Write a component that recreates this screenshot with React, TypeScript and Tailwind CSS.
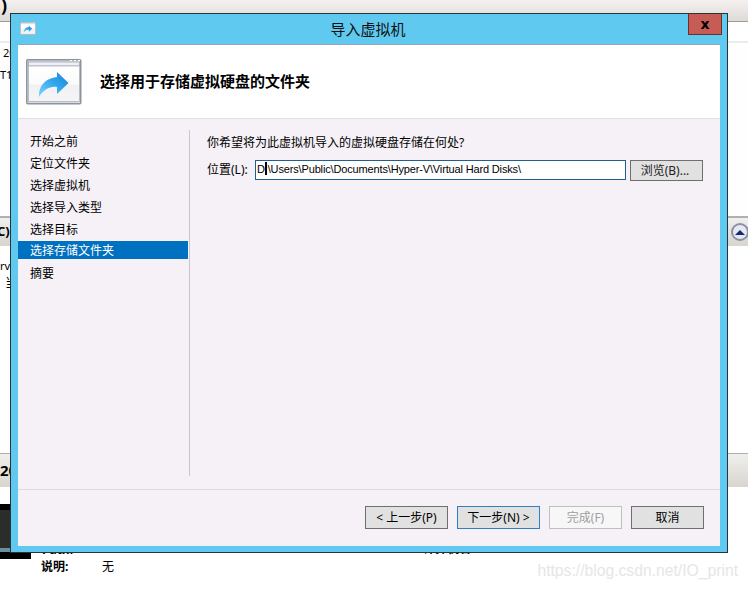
import React from 'react';

const cjk = { fontFamily: '"Noto Sans", "Noto Sans CJK SC", sans-serif' };

const steps = ['开始之前', '定位文件夹', '选择虚拟机', '选择导入类型', '选择目标', '选择存储文件夹', '摘要'];

const WizardIcon: React.FC<{ className: string }> = ({ className }) => (
  <svg viewBox="0 0 56 46" className={className}>
    <defs>
      <linearGradient id="arrowFill" x1="0" y1="1" x2="1" y2="0">
        <stop offset="0" stopColor="#7fd4fb" />
        <stop offset="0.55" stopColor="#2fa5ee" />
        <stop offset="1" stopColor="#1d7fd0" />
      </linearGradient>
      <linearGradient id="paneFill" x1="0" y1="0" x2="0" y2="1">
        <stop offset="0" stopColor="#ffffff" />
        <stop offset="0.5" stopColor="#fbfbfc" />
        <stop offset="0.55" stopColor="#f1f1f3" />
        <stop offset="1" stopColor="#f5f5f7" />
      </linearGradient>
    </defs>
    <rect x="0.75" y="0.75" width="54" height="44" rx="1" fill="#d9dce3" stroke="#8e939c" strokeWidth="1.5" />
    <rect x="2.5" y="3" width="51" height="4" fill="#eef0f5" stroke="#9aa0ab" strokeWidth="0.75" />
    <rect x="2.5" y="7" width="51" height="35.5" fill="url(#paneFill)" stroke="#a8aeb8" strokeWidth="0.75" />
    <path d="M44 1.5h2M48 1.5h2M52 1.5h2" stroke="#ffffff" strokeWidth="1" />
    <path
      d="M13 38 C12 27 20 19 31 18 L31 13 L42.5 24 L31 35 L31 28 C24 27 17 31 13 38 Z"
      fill="url(#arrowFill)"
    />
  </svg>
);

const DlgButton: React.FC<{ className: string; children: React.ReactNode }> = ({ className, children }) => (
  <button className={`h-[23px] border text-[12px] leading-none flex items-center justify-center ${className}`}>
    {children}
  </button>
);

export default function App() {
  return (
    <div className="relative w-[748px] h-[590px] overflow-hidden bg-white text-black" style={cjk}>
      {/* window behind the dialog */}
      <div className="flex flex-col h-full">
        <div className="h-[22px] bg-gradient-to-b from-[#f3f0ef] to-[#dedbd6] border-b border-[#9d9d9b] text-[18px] font-bold leading-[10px] pl-[1px]">
          )
        </div>
        <div className="h-[21px] border-b-2 border-[#ececec]" />
        <div className="h-[173px] text-[11px] leading-[22px] bg-[#fefefe]">
          <p className="pl-[3px] -mt-[1px]">20</p>
          <p>T1</p>
        </div>
        <div className="h-[30px] border-t-2 border-[#b0b0b0] bg-gradient-to-b from-[#f1efec] to-[#d8d5cf] flex items-center justify-between pl-0">
          <span className="text-[13px] font-bold -ml-[3px]">C)</span>
          <span className="w-[18px] h-[18px] mr-[-1px] rounded-full border-2 border-[#8c90a8] bg-[#e8e9ee] flex items-center justify-center">
            <span className="w-0 h-0 border-x-[5px] border-x-transparent border-b-[5px] border-b-[#12297a]" />
          </span>
        </div>
        <div className="h-[207px] text-[11px] leading-[16px] pt-[12px]">
          <p>rv</p>
          <p className="pl-[5px] text-[13px]">当</p>
        </div>
        <div className="h-[34px] border-t border-[#b0b0b0] bg-gradient-to-b from-[#f1efec] to-[#d8d5cf] text-[15px] font-bold flex items-center">
          20
        </div>
        <div className="h-[17px]" />
        <div className="h-[55px] flex">
          <div className="w-[31px] flex flex-col">
            <div className="h-[6px] bg-black" />
            <div className="h-[38px] bg-[#2b2d2b]" />
            <div className="h-[4px] bg-[#6a8f9e]" />
            <div className="h-[7px] bg-black" />
          </div>
          <span className="ml-[11px] mt-[37px] h-[16px] text-[12px] font-bold">Path:</span>
          <span className="ml-[350px] mt-[36px] h-[16px] text-[12px] font-bold">计算机名:</span>
        </div>
        <div className="flex-1 flex items-start justify-between pl-[41px] pr-[10px] text-[12px]">
          <div className="flex -mt-[1px]">
            <span className="w-[61px] font-bold">说明:</span>
            <span>无</span>
          </div>
          <span className="text-[#e6e6e6] text-[15.7px] leading-[18px] mt-[3px]" style={{ fontFamily: '"Liberation Sans", sans-serif' }}>
            https://blog.csdn.net/IO_print
          </span>
        </div>
      </div>

      {/* dialog */}
      <div className="absolute left-[10px] top-[13px] w-[718px] h-[540px] border border-[#27343c] bg-[#60c9f0] flex flex-col px-[7px] pb-[6px]">
        <div className="h-[30px] shrink-0 grid grid-cols-[1fr_auto_1fr] items-start -mx-[7px] px-[9px]">
          <WizardIcon className="w-[16px] h-[13px] mt-[8px]" />
          <span className="text-[15px] leading-[30px] text-[#111] pr-[2px]">导入虚拟机</span>
          <div className="flex justify-end -mr-[4px]">
            <div className="w-[34px] h-[21px] bg-[#c75b55] border border-[#6b2f2c] border-t-0 flex items-center justify-center text-[14px] font-bold leading-none" style={{ fontFamily: '"DejaVu Sans", sans-serif' }}>
              x
            </div>
          </div>
        </div>

        <div className="flex-1 flex flex-col bg-[#f5f1f6] border-t border-[#8fa9b8]">
          <div className="h-[74px] bg-white border-b border-[#e4dde6] flex items-center shrink-0">
            <WizardIcon className="w-[56px] h-[46px] ml-[8px] mt-[1px]" />
            <h1 className="ml-[18px] text-[15px] font-bold">选择用于存储虚拟硬盘的文件夹</h1>
          </div>

          <div className="h-[370px] flex shrink-0">
            <div className="w-[172px] mt-[11px] mb-[13px] border-r border-[#c9c6cc]">
              <ul className="pt-[1px] w-[170px]">
                {steps.map((s, i) => (
                  <li
                    key={s}
                    className={`pl-[12px] text-[12px] flex items-center ${i === 5 ? 'h-[18px] mb-[4px] pt-[2px] bg-[#0070c0] text-white' : 'h-[22px]'}`}
                  >
                    {s}
                  </li>
                ))}
              </ul>
            </div>
            <div className="flex-1 pl-[17px] pt-[15px] text-[12px]">
              <p className="leading-[18px]">你希望将为此虚拟机导入的虚拟硬盘存储在何处?</p>
              <div className="flex items-start mt-[8px]">
                <label className="w-[48px] h-[20px] leading-[20px]">位置(L):</label>
                <div className="w-[371px] h-[20px] border border-[#1f5f8f] bg-white pl-[1px] text-[11px] leading-[17px] overflow-hidden whitespace-nowrap tracking-[-0.15px]" style={{ fontFamily: '"Liberation Sans", sans-serif' }}>
                  D
                  <span className="relative">
                    :
                    <span className="absolute left-[0px] top-[-1px] w-[2px] h-[13px] bg-black" />
                  </span>
                  \Users\Public\Documents\Hyper-V\Virtual Hard Disks\
                </div>
                <DlgButton className="ml-[4px] w-[73px] !h-[21px] border-[#6f6f6f] bg-[#e1e1e1] text-[#222] pr-[3px]">浏览(B)...</DlgButton>
              </div>
            </div>
          </div>

          <div className="border-t border-[#e0d9e2] flex-1 flex justify-end items-start pt-[16px] pr-[16px]">
            <div className="flex gap-[9px]">
              <DlgButton className="w-[83px] border-[#6f6f6f] bg-[#e1e1e1]">&lt; 上一步(P)</DlgButton>
              <DlgButton className="w-[83px] border-[#2f7fc1] bg-[#e1e1e1]">下一步(N) &gt;</DlgButton>
              <DlgButton className="w-[73px] border-[#bfbfbf] bg-[#f7f7f7] text-[#a0a0a0]">完成(F)</DlgButton>
              <DlgButton className="w-[73px] border-[#6f6f6f] bg-[#e1e1e1]">取消</DlgButton>
            </div>
          </div>
        </div>
      </div>
    </div>
  );
}
